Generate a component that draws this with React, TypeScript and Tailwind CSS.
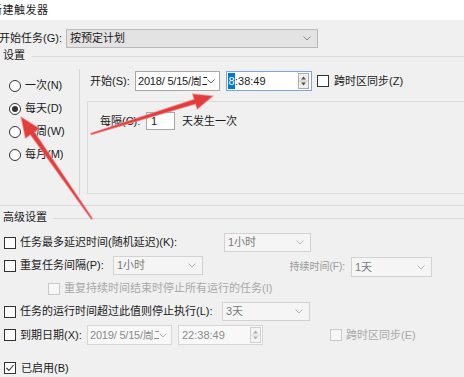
import React from "react";

type Pt = [number, number];

function arrowPoints(tail: Pt, tip: Pt, wt: number, wh: number, hw: number, hl: number) {
  const dx = tip[0] - tail[0];
  const dy = tip[1] - tail[1];
  const len = Math.hypot(dx, dy);
  const ux = dx / len;
  const uy = dy / len;
  const nx = -uy;
  const ny = ux;
  const bx = tip[0] - ux * hl;
  const by = tip[1] - uy * hl;
  const p = (x: number, y: number) => `${x.toFixed(1)},${y.toFixed(1)}`;
  return [
    p(tail[0] + (nx * wt) / 2, tail[1] + (ny * wt) / 2),
    p(bx + (nx * wh) / 2, by + (ny * wh) / 2),
    p(bx + (nx * hw) / 2, by + (ny * hw) / 2),
    p(tip[0], tip[1]),
    p(bx - (nx * hw) / 2, by - (ny * hw) / 2),
    p(bx - (nx * wh) / 2, by - (ny * wh) / 2),
    p(tail[0] - (nx * wt) / 2, tail[1] - (ny * wt) / 2),
  ].join(" ");
}

function Chevron({ color = "#606060" }: { color?: string }) {
  return (
    <svg width="8" height="5" viewBox="0 0 8 5">
      <path d="M0.5 0.5 L4 4 L7.5 0.5" fill="none" stroke={color} strokeWidth="1" />
    </svg>
  );
}

function Spinner({ disabled }: { disabled?: boolean }) {
  const c = disabled ? "#b0b0b0" : "#505050";
  return (
    <div
      className={
        disabled
          ? "w-[11px] h-[16px] border border-[#d0d0d0] bg-[#f4f4f4] flex items-center justify-center"
          : "w-[11px] h-[16px] border border-[#adadad] bg-[#f0f0f0] flex items-center justify-center"
      }
    >
      <svg width="9" height="14" viewBox="0 0 9 14">
        <path d="M2 5.5 L4.5 2.5 L7 5.5Z" fill={c} />
        <line x1="0" y1="7" x2="9" y2="7" stroke={disabled ? "#dcdcdc" : "#c8c8c8"} strokeWidth="1" />
        <path d="M2 8.5 L4.5 11.5 L7 8.5Z" fill={c} />
      </svg>
    </div>
  );
}

function Check({ checked, disabled }: { checked?: boolean; disabled?: boolean }) {
  return (
    <span
      className={
        disabled
          ? "w-[12px] h-[12px] shrink-0 border border-[#c8c8c8] bg-[#f7f7f7] flex items-center justify-center"
          : "w-[12px] h-[12px] shrink-0 border border-[#333333] bg-white flex items-center justify-center"
      }
    >
      {checked && (
        <svg width="10" height="10" viewBox="0 0 10 10">
          <path d="M1.5 5 L4 7.5 L8.5 2" fill="none" stroke="#333333" strokeWidth="1.1" />
        </svg>
      )}
    </span>
  );
}

function Radio({ checked, label }: { checked?: boolean; label: string }) {
  return (
    <div className="h-[23px] flex items-center pl-[9px] gap-[4px]">
      <span className="w-[12px] h-[12px] rounded-full border border-[#333333] bg-white flex items-center justify-center">
        {checked && <span className="w-[6px] h-[6px] rounded-full bg-[#333333]" />}
      </span>
      <span>{label}</span>
    </div>
  );
}

function DSelect({ className, text }: { className: string; text: string }) {
  return (
    <div className={className}>
      <span className="pl-[3px] text-[#7a7a7a]">{text}</span>
      <span className="pr-[6px]">
        <Chevron color="#b5b5b5" />
      </span>
    </div>
  );
}

export default function App() {
  const font = "font-['Liberation_Sans','Noto_Sans_CJK_SC',sans-serif]";
  return (
    <div className={`${font} relative w-[464px] h-[377px] overflow-hidden bg-[#f0f0f0] text-[11px] leading-none text-[#1a1a1a]`}>
      {/* title */}
      <div className="h-[20px] bg-white flex items-center">
        <span className="-ml-[9px] tracking-[0.5px]">新建触发器</span>
      </div>

      {/* start task */}
      <div className="mt-[9px] h-[19px] flex items-center">
        <span className="-ml-[1px] w-[67px]">开始任务(G):</span>
        <div className="w-[252px] h-full bg-[#e3e3e3] border border-[#b9b9b9] flex items-center justify-between">
          <span className="pl-[3px]">按预定计划</span>
          <span className="pr-[6px]">
            <Chevron color="#8a8a8a" />
          </span>
        </div>
      </div>

      {/* settings group */}
      <div className="h-[14px] flex items-center">
        <span className="pl-[3px]">设置</span>
        <div className="flex-1 h-px bg-[#dcdcdc] ml-[6px] mt-[2px]" />
      </div>
      <div className="flex h-[144px] border-b border-[#dcdcdc]">
        <div className="w-[79px] flex flex-col pt-[12px]">
          <Radio label="一次(N)" />
          <Radio checked label="每天(D)" />
          <Radio label="每周(W)" />
          <Radio label="每月(M)" />
        </div>
        <div className="mt-[7px] mb-[10px] border-l border-[#d5d5d5]" />
        <div className="flex-1 flex flex-col">
          <div className="mt-[9px] h-[20px] flex items-center pl-[10px]">
            <span className="w-[45px]">开始(S):</span>
            <div className="w-[85px] h-full bg-white border border-[#a8a8a8] flex items-center justify-between">
              <span className="pl-[2px] w-[72px] overflow-hidden whitespace-nowrap tracking-[-0.2px]">2018/&nbsp;5/15/周二</span>
              <span className="pr-[4px]">
                <Chevron />
              </span>
            </div>
            <div className="ml-[6px] w-[86px] h-full bg-white border border-[#7ea6d6] flex items-center justify-between">
              <span className="pl-[1px] flex items-center">
                <span className="bg-[#0078d7] text-white h-[16px] w-[7px] flex items-center justify-center">8</span>
                <span>:38:49</span>
              </span>
              <span className="pr-[2px]">
                <Spinner />
              </span>
            </div>
            <span className="ml-[5px]">
              <Check />
            </span>
            <span className="ml-[5px]">跨时区同步(Z)</span>
          </div>
          <div className="mt-[10px] ml-[7px] h-[93px] border border-r-0 border-[#dadada]">
            <div className="mt-[10px] h-[18px] flex items-center pl-[12px]">
              <span className="w-[46px]">每隔(C):</span>
              <div className="w-[29px] h-full bg-white border border-[#a8a8a8] flex items-center pl-[4px]">1</div>
              <span className="ml-[7px]">天发生一次</span>
            </div>
          </div>
        </div>
      </div>

      {/* advanced */}
      <div className="h-[22px] flex items-center">
        <span className="pl-[3px]">高级设置</span>
        <div className="flex-1 h-px bg-[#dcdcdc] ml-[6px] mt-[3px]" />
      </div>

      <div className="mt-[5px] h-[19px] flex items-center">
        <span className="ml-[4px]">
          <Check />
        </span>
        <span className="ml-[4px] w-[204px]">任务最多延迟时间(随机延迟)(K):</span>
        <DSelect
          className="w-[87px] h-full bg-[#f5f5f5] border border-[#d2d2d2] flex items-center justify-between"
          text="1小时"
        />
      </div>

      <div className="mt-[4px] h-[19px] flex items-center">
        <span className="ml-[4px]">
          <Check />
        </span>
        <span className="ml-[4px] w-[93px]">重复任务间隔(P):</span>
        <DSelect
          className="w-[90px] h-full bg-[#f5f5f5] border border-[#d2d2d2] flex items-center justify-between"
          text="1小时"
        />
        <div className="h-full flex items-center pt-[3px]">
          <span className="w-[142px] text-right text-[#9a9a9a] text-[10px]">持续时间(F):</span>
          <DSelect
            className="ml-[6px] w-[81px] h-[20px] bg-[#f5f5f5] border border-[#d2d2d2] flex items-center justify-between"
            text="1天"
          />
        </div>
      </div>

      <div className="mt-[4px] h-[19px] flex items-center">
        <span className="ml-[48px]">
          <Check disabled />
        </span>
        <span className="ml-[4px] text-[#a8a8a8]">重复持续时间结束时停止所有运行的任务(I)</span>
      </div>

      <div className="mt-[4px] h-[19px] flex items-center">
        <span className="ml-[4px]">
          <Check />
        </span>
        <span className="ml-[4px] w-[202px]">任务的运行时间超过此值则停止执行(L):</span>
        <DSelect
          className="w-[88px] h-full bg-[#f5f5f5] border border-[#d2d2d2] flex items-center justify-between"
          text="3天"
        />
      </div>

      <div className="mt-[4px] h-[20px] flex items-center">
        <span className="ml-[4px]">
          <Check />
        </span>
        <span className="ml-[4px] w-[67px]">到期日期(X):</span>
        <div className="w-[85px] h-full bg-[#f8f8f8] border border-[#d6d6d6] flex items-center justify-between text-[#8a8a8a]">
          <span className="pl-[2px] w-[72px] overflow-hidden whitespace-nowrap tracking-[-0.2px]">2019/&nbsp;5/15/周二</span>
          <span className="pr-[4px]">
            <Chevron color="#b5b5b5" />
          </span>
        </div>
        <div className="ml-[6px] w-[85px] h-full bg-[#f8f8f8] border border-[#d6d6d6] flex items-center justify-between text-[#8a8a8a]">
          <span className="pl-[3px]">22:38:49</span>
          <span className="pr-[1px]">
            <Spinner disabled />
          </span>
        </div>
        <span className="ml-[67px]">
          <Check disabled />
        </span>
        <span className="ml-[4px] text-[#a8a8a8]">跨时区同步(E)</span>
      </div>

      <div className="mt-[13px] h-[20px] flex items-center">
        <span className="ml-[4px]">
          <Check checked />
        </span>
        <span className="ml-[5px]">已启用(B)</span>
      </div>

      {/* red annotation arrows */}
      <svg className="absolute inset-0 pointer-events-none" width="464" height="377" viewBox="0 0 464 377">
        <polygon
          points={arrowPoints([92, 219], [21, 117], 1.5, 5, 17, 20)}
          fill="#e23c3c"
          stroke="#f08a8a"
          strokeWidth="1.2"
          strokeOpacity="0.6"
        />
        <polygon
          points={arrowPoints([91, 134], [213, 96], 1.5, 5, 16, 19)}
          fill="#e23c3c"
          stroke="#f08a8a"
          strokeWidth="1.2"
          strokeOpacity="0.6"
        />
      </svg>
    </div>
  );
}
